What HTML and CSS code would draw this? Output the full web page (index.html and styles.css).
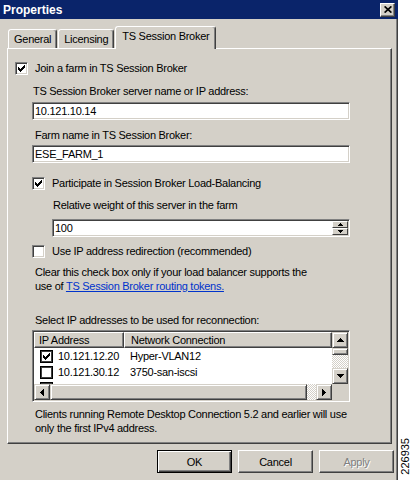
FILE: index.html
```html
<!DOCTYPE html>
<html lang="en">
<head>
  <meta charset="UTF-8" />
  <title>Properties</title>
  <link rel="stylesheet" href="styles.css">
</head>
<body>
  <div class="screen">
    <div class="dialog">
      <div class="titlebar">
        <span class="title">Properties</span>
        <span class="close-btn">
          <svg width="8" height="7" viewBox="0 0 8 7"><path d="M0.6 0.4l6.8 6.2M7.4 0.4l-6.8 6.2" stroke="#000" stroke-width="1.7" /></svg>
        </span>
      </div>
      <div class="dialog-body">
        <div class="tabs">
          <div class="tab">General</div>
          <div class="tab">Licensing</div>
          <div class="tab active">TS Session Broker</div>
        </div>
        <div class="panel">
          <div class="check-row">
            <span class="checkbox"><svg class="tick" width="7" height="7" viewBox="0 0 7 7"><path d="M0 2H1V3H2V4H3V3H4V2H5V1H6V0H7V3H6V4H5V5H4V6H3V7H2V6H1V5H0Z" /></svg></span>
            <span>Join a farm in TS Session Broker</span>
          </div>
          <div class="indent">
            <div class="field-label first">TS Session Broker server name or IP address:</div>
            <div class="textbox">10.121.10.14</div>
            <div class="field-label farm">Farm name in TS Session Broker:</div>
            <div class="textbox short-gap">ESE_FARM_1</div>

            <div class="check-row participate">
              <span class="checkbox"><svg class="tick" width="7" height="7" viewBox="0 0 7 7"><path d="M0 2H1V3H2V4H3V3H4V2H5V1H6V0H7V3H6V4H5V5H4V6H3V7H2V6H1V5H0Z" /></svg></span>
              <span>Participate in Session Broker Load-Balancing</span>
            </div>
            <div class="sub-indent">
              <div class="field-label weight">Relative weight of this server in the farm</div>
              <div class="textbox spin">
                <span class="spin-value">100</span>
                <span class="spinner">
                  <span class="spin-btn"><svg width="5" height="3" viewBox="0 0 5 3"><path d="M2 0h1v1h1v1h1v1H0V2h1V1h1z" /></svg></span>
                  <span class="spin-btn"><svg width="5" height="3" viewBox="0 0 5 3"><path d="M0 0h5v1H4v1H3v1H2V2H1V1H0z" /></svg></span>
                </span>
              </div>
            </div>

            <div class="check-row redirect">
              <span class="checkbox"></span>
              <span>Use IP address redirection (recommended)</span>
            </div>
            <p class="note clear-note">Clear this check box only if your load balancer supports the<br>use of <a href="#">TS Session Broker routing tokens.</a></p>

            <div class="field-label select">Select IP addresses to be used for reconnection:</div>
            <div class="listview">
              <div class="lv-content">
                <div class="lv-header">
                  <span class="lv-col col-ip">IP Address</span>
                  <span class="lv-col col-net">Network Connection</span>
                </div>
                <div class="lv-row">
                  <span class="cell-ip"><span class="lv-check"><svg class="tick" width="7" height="7" viewBox="0 0 7 7"><path d="M0 2H1V3H2V4H3V3H4V2H5V1H6V0H7V3H6V4H5V5H4V6H3V7H2V6H1V5H0Z" /></svg></span>10.121.12.20</span>
                  <span class="cell-net">Hyper-VLAN12</span>
                </div>
                <div class="lv-row">
                  <span class="cell-ip"><span class="lv-check"></span>10.121.30.12</span>
                  <span class="cell-net">3750-san-iscsi</span>
                </div>
                <div class="lv-row">
                  <span class="cell-ip"><span class="lv-check"></span></span>
                  <span class="cell-net"></span>
                </div>
              </div>
              <div class="vscroll">
                <span class="sb-btn"><svg width="7" height="4" viewBox="0 0 7 4"><path d="M3 0h1v1h1v1h1v1h1v1H0V3h1V2h1V1h1z" /></svg></span>
                <span class="sb-thumb v"></span>
                <span class="sb-track"></span>
                <span class="sb-btn"><svg width="7" height="4" viewBox="0 0 7 4"><path d="M0 0h7v1H6v1H5v1H4v1H3V3H2V2H1V1H0z" /></svg></span>
              </div>
              <div class="hscroll">
                <span class="sb-btn"><svg width="4" height="7" viewBox="0 0 4 7"><path d="M3 0h1v7H3V6H2V5H1V4H0V3h1V2h1V1h1z" /></svg></span>
                <span class="sb-thumb h"></span>
                <span class="sb-track"></span>
                <span class="sb-btn"><svg width="4" height="7" viewBox="0 0 4 7"><path d="M0 0h1v1h1v1h1v1h1v1H3v1H2v1H1v1H0z" /></svg></span>
              </div>
              <div class="sb-corner"></div>
            </div>
            <p class="note clients-note">Clients running Remote Desktop Connection 5.2 and earlier will use<br>only the first IPv4 address.</p>
          </div>
        </div>
        <div class="buttons">
          <button class="btn default">OK</button>
          <button class="btn">Cancel</button>
          <button class="btn disabled">Apply</button>
        </div>
      </div>
    </div>
    <div class="side"><span class="fig-id">226935</span></div>
  </div>
</body>
</html>
```

FILE: styles.css
```css
* {
  box-sizing: border-box;
}
body {
  margin: 0;
  font-family: 'Liberation Sans', Arial, sans-serif;
  font-size: 11px;
  letter-spacing: -0.27px;
  color: #000;
  background: #fff;
}
.screen {
  display: flex;
  width: 413px;
  height: 480px;
  overflow: hidden;
}
.dialog {
  width: 398px;
  height: 480px;
  background: #d4d0c8;
  display: flex;
  flex-direction: column;
}
.titlebar {
  height: 19px;
  background: #0a246a;
  display: flex;
  align-items: center;
  justify-content: space-between;
  padding: 0 3px 0 3px;
}
.title {
  color: #fff;
  font-weight: bold;
  font-size: 12px;
  letter-spacing: 0;
}
.close-btn {
  width: 15px;
  height: 14px;
  background: #d4d0c8;
  border: 1px solid;
  border-color: #fff #404040 #404040 #fff;
  box-shadow: inset -1px -1px #808080;
  display: flex;
  align-items: center;
  justify-content: center;
}
.dialog-body {
  flex: 1;
  padding: 7px 4px 0 7px;
  box-shadow: inset -1px 0 #404040, inset -2px 0 #808080;
}

/* tabs */
.tabs {
  display: flex;
  align-items: flex-end;
  height: 22px;
  padding-left: 1px;
  position: relative;
  z-index: 1;
}
.tab {
  height: 19px;
  padding: 3px 5px 0;
  line-height: 13px;
  border: 1px solid;
  border-bottom: none;
  border-color: #fff #404040 transparent #fff;
  box-shadow: inset -1px 0 #808080;
  border-radius: 3px 3px 0 0;
  background: #d4d0c8;
}
.tab + .tab {
  margin-left: 1px;
}
.tab.active {
  height: 23px;
  margin-bottom: -1px;
  padding: 3px 6px 0;
}

/* tab page */
.panel {
  width: 385px;
  height: 396px;
  border: 1px solid;
  border-color: #fff #404040 #404040 #fff;
  box-shadow: inset -1px -1px #808080;
  padding: 13px 0 0 7px;
}
.check-row {
  display: flex;
  align-items: center;
  gap: 7px;
  height: 13px;
  line-height: 13px;
}
.checkbox {
  width: 13px;
  height: 13px;
  flex: none;
  background: #fff;
  border: 1px solid;
  border-color: #808080 #fff #fff #808080;
  box-shadow: inset 1px 1px #404040, inset -1px -1px #d4d0c8;
  display: flex;
  align-items: center;
  justify-content: center;
}
.tick {
  shape-rendering: crispEdges;
}
.indent {
  margin-left: 17px;
  width: 318px;
}
.field-label {
  line-height: 13px;
  margin-left: 1px;
  white-space: nowrap;
}
.field-label.first {
  margin-top: 10px;
}
.field-label.farm {
  margin-top: 9px;
  margin-left: 3px;
}
.field-label.weight {
  margin-top: 9px;
}
.field-label.select {
  margin-top: 21px;
  margin-left: 3px;
}
.textbox {
  height: 18px;
  margin-top: 4px;
  padding: 1px 0 0 2px;
  line-height: 14px;
  background: #fff;
  border: 1px solid;
  border-color: #808080 #fff #fff #808080;
  box-shadow: inset 1px 1px #404040, inset -1px -1px #d4d0c8;
}
.textbox.short-gap {
  margin-top: 3px;
}
.check-row.participate {
  margin-top: 14px;
}
.sub-indent {
  margin-left: 20px;
}
.textbox.spin {
  display: flex;
  margin-top: 7px;
  padding: 1px 1px 1px 2px;
}
.spin-value {
  flex: 1;
}
.spinner {
  width: 16px;
  display: flex;
  flex-direction: column;
}
.spin-btn {
  flex: 1;
  background: #d4d0c8;
  border: 1px solid;
  border-color: #fff #404040 #404040 #fff;
  display: flex;
  align-items: center;
  justify-content: center;
}
.spin-btn svg, .sb-btn svg {
  shape-rendering: crispEdges;
}
.check-row.redirect {
  margin-top: 8px;
}
.note {
  margin: 0 0 0 3px;
  line-height: 14px;
  white-space: nowrap;
}
.note a {
  color: #0033cc;
}
.clear-note {
  margin-top: 7px;
}
.clients-note {
  margin-top: 5px;
}

/* list view */
.listview {
  margin-top: 3px;
  height: 72px;
  padding: 1px;
  background: #fff;
  border: 1px solid;
  border-color: #808080 #fff #fff #808080;
  box-shadow: inset 1px 1px #404040, inset -1px -1px #d4d0c8;
  display: grid;
  grid-template-columns: 1fr 16px;
  grid-template-rows: 52px 16px;
}
.lv-content {
  overflow: hidden;
  background: #fff;
}
.lv-header {
  display: flex;
  height: 16px;
}
.lv-col {
  height: 16px;
  line-height: 14px;
  padding-left: 4px;
  background: #d4d0c8;
  border: 1px solid;
  border-color: #fff #404040 #404040 #fff;
  box-shadow: inset -1px -1px #808080;
}
.col-ip {
  width: 90px;
}
.col-net {
  flex: 1;
  padding-left: 6px;
}
.lv-row {
  display: flex;
  align-items: center;
  height: 16px;
}
.cell-ip {
  width: 90px;
  display: flex;
  align-items: center;
  gap: 5px;
  padding-left: 6px;
}
.cell-net {
  padding-left: 6px;
}
.lv-check {
  width: 13px;
  height: 13px;
  border: 1px solid #000;
  box-shadow: inset 0 0 0 1px #404040;
  background: #fff;
  display: flex;
  align-items: center;
  justify-content: center;
}
.vscroll, .hscroll {
  display: flex;
  background: repeating-conic-gradient(#fff 0 25%, #d4d0c8 0 50%) 0 0 / 2px 2px;
}
.vscroll {
  flex-direction: column;
}
.sb-btn, .sb-thumb {
  flex: none;
  width: 16px;
  height: 16px;
  background: #d4d0c8;
  border: 1px solid;
  border-color: #d4d0c8 #404040 #404040 #d4d0c8;
  box-shadow: inset 1px 1px #fff, inset -1px -1px #808080;
  display: flex;
  align-items: center;
  justify-content: center;
}
.sb-thumb.v {
  height: 7px;
}
.sb-thumb.h {
  width: 257px;
}
.sb-track {
  flex: 1;
}
.sb-corner {
  background: #d4d0c8;
}

/* buttons */
.buttons {
  display: flex;
  justify-content: flex-end;
  gap: 6px;
  margin-top: 6px;
}
.btn {
  width: 75px;
  height: 23px;
  padding: 0;
  font-family: 'Liberation Sans', Arial, sans-serif;
  font-size: 11px;
  letter-spacing: -0.27px;
  color: #000;
  background: #d4d0c8;
  border: 1px solid;
  border-color: #fff #404040 #404040 #fff;
  box-shadow: inset -1px -1px #808080;
}
.btn.default {
  border-color: #000;
  box-shadow: inset 1px 1px #fff, inset -1px -1px #404040, inset -2px -2px #808080;
}
.btn.disabled {
  color: #808080;
  text-shadow: 1px 1px #fff;
}

/* figure number strip */
.side {
  width: 15px;
  display: flex;
  align-items: flex-end;
  justify-content: center;
  padding-bottom: 5px;
}
.fig-id {
  writing-mode: vertical-rl;
  transform: rotate(180deg);
  font-size: 11px;
  line-height: 11px;
  letter-spacing: 0;
}
```
